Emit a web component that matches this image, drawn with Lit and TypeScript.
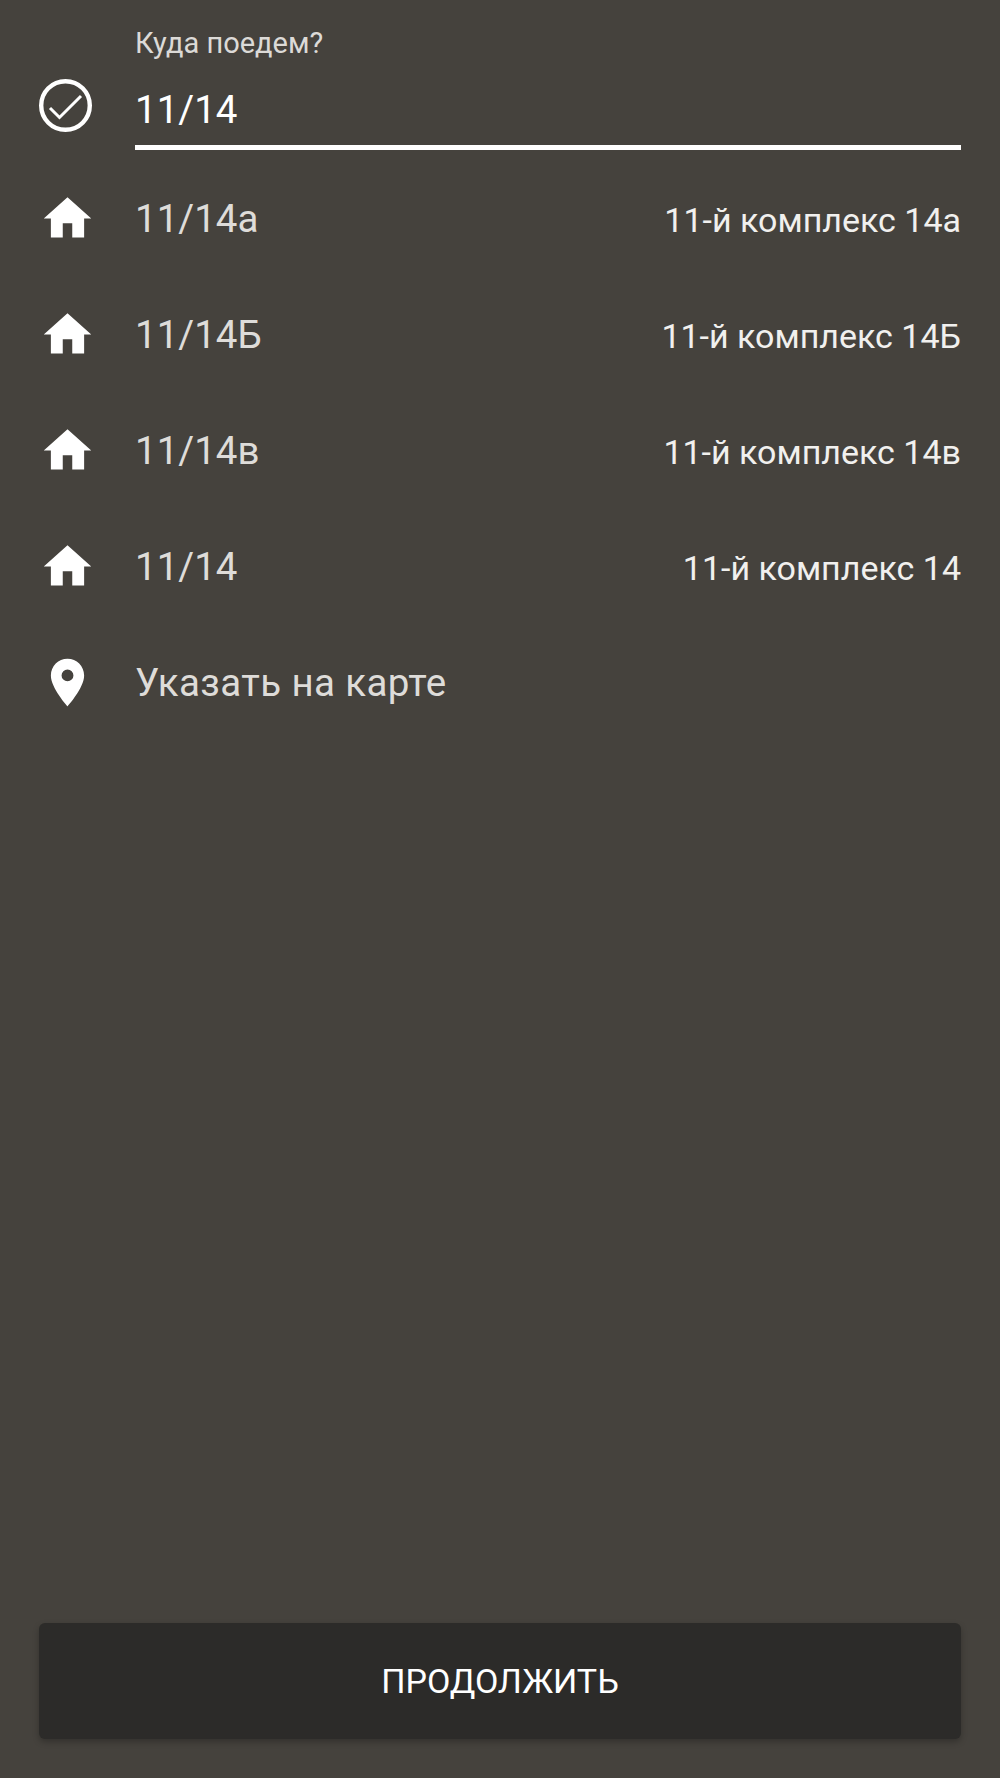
import { LitElement, html, css, svg } from 'lit';
import { customElement } from 'lit/decorators.js';

const homeIcon = svg`<path d="M10 20v-6h4v6h5v-8h3L12 3 2 12h3v8z"/>`;
const pinIcon = svg`<path d="M12 2C8.13 2 5 5.13 5 9c0 5.25 7 13 7 13s7-7.75 7-13c0-3.87-3.13-7-7-7zm0 9.5a2.5 2.5 0 0 1 0-5 2.5 2.5 0 0 1 0 5z"/>`;

const results = [
  { title: '11/14а', detail: '11-й комплекс 14а' },
  { title: '11/14Б', detail: '11-й комплекс 14Б' },
  { title: '11/14в', detail: '11-й комплекс 14в' },
  { title: '11/14', detail: '11-й комплекс 14' },
];

@customElement('app-root')
export class AppRoot extends LitElement {
  static styles = css`
    :host {
      display: flex;
      flex-direction: column;
      height: 1778px;
      box-sizing: border-box;
      padding: 0 39px 39px;
      background: #45423d;
      font-family: Roboto, sans-serif;
      color: #fff;
    }

    .search {
      display: flex;
      align-items: flex-end;
      height: 150px;
    }

    .check {
      display: block;
      width: 54px;
      height: 54px;
      margin-bottom: 17px;
      flex: none;
    }

    .field {
      flex: 1;
      margin-left: 42px;
      border-bottom: 5px solid #fff;
    }

    .label {
      font-size: 29px;
      line-height: 32px;
      color: #dcdad7;
    }

    .value {
      font-size: 38.5px;
      line-height: 45px;
      margin-top: 28px;
      padding-bottom: 13px;
    }

    .list {
      flex: 1;
      padding-top: 10px;
    }

    .row {
      display: flex;
      align-items: center;
      height: 116px;
    }

    .row svg {
      display: block;
      width: 57px;
      height: 57px;
      fill: #fff;
      flex: none;
    }

    .title {
      flex: 1;
      margin-left: 39px;
      font-size: 38.5px;
      color: #dedcd9;
    }

    .title.place {
      letter-spacing: 0.4px;
    }

    .detail {
      padding-top: 4px;
      font-size: 34px;
      color: #f1f0ee;
    }

    button {
      display: block;
      width: 100%;
      height: 116px;
      border: none;
      border-radius: 6px;
      background: #2c2b29;
      box-shadow: 0 3px 6px rgba(0, 0, 0, 0.25);
      color: #fff;
      font-family: inherit;
      font-size: 34px;
    }
  `;

  render() {
    return html`
      <div class="search">
        <svg class="check" viewBox="0 0 54 54" fill="none" stroke="#fff">
          <circle cx="26.5" cy="26.5" r="24.3" stroke-width="4.4"/>
          <path d="M11 29l9.5 9.5L42 17" stroke-width="3"/>
        </svg>
        <div class="field">
          <div class="label">Куда поедем?</div>
          <div class="value">11/14</div>
        </div>
      </div>
      <div class="list">
        ${results.map(r => html`
          <div class="row">
            <svg viewBox="0 0 24 24">${homeIcon}</svg>
            <div class="title">${r.title}</div>
            <div class="detail">${r.detail}</div>
          </div>
        `)}
        <div class="row">
          <svg viewBox="0 0 24 24">${pinIcon}</svg>
          <div class="title place">Указать на карте</div>
        </div>
      </div>
      <button>ПРОДОЛЖИТЬ</button>
    `;
  }
}
